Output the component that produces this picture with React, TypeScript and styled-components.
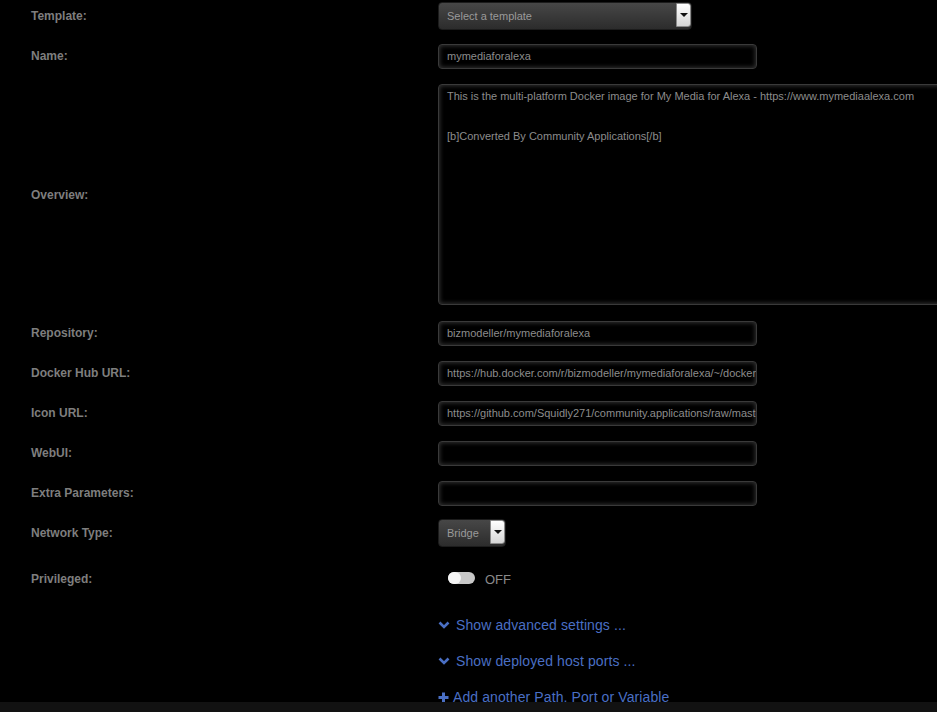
import React from "react";
import styled, { createGlobalStyle } from "styled-components";

const Global = createGlobalStyle`
  html, body { margin: 0; padding: 0; background: #000; overflow: hidden; }
  body { font-family: "Liberation Sans", Arial, sans-serif; }
`;

const Page = styled.div`
  width: 937px;
  height: 712px;
  overflow: hidden;
  background: #000;
`;

const Form = styled.div`
  display: flex;
  flex-direction: column;
`;

const Row = styled.div<{ $h?: number; $mt?: number }>`
  display: grid;
  grid-template-columns: 438px 1fr;
  align-items: center;
  min-height: ${(p) => p.$h ?? 40}px;
  margin-top: ${(p) => p.$mt ?? 0}px;
`;

const Label = styled.div`
  padding-left: 31px;
  font-size: 12px;
  font-weight: bold;
  color: #7e7e7e;
`;

const Input = styled.div`
  box-sizing: border-box;
  width: 319px;
  height: 25px;
  padding: 0 8px;
  display: flex;
  align-items: center;
  background: #000;
  border: 1px solid #3a3a3a;
  border-radius: 4px;
  box-shadow: inset 0 0 4px 1px rgba(90, 90, 90, 0.55);
  color: #8c8c8c;
  font-size: 11px;
  white-space: nowrap;
  overflow: hidden;
`;

const TextArea = styled.div`
  box-sizing: border-box;
  width: 560px;
  height: 221px;
  margin: 8px 0;
  padding: 1px 8px;
  background: #000;
  border: 1px solid #3a3a3a;
  border-radius: 4px;
  box-shadow: inset 0 0 4px 1px rgba(90, 90, 90, 0.55);
  color: #8c8c8c;
  font-size: 11px;
  line-height: 20px;
  white-space: pre-wrap;
`;

const Select = styled.div<{ $w: number }>`
  box-sizing: border-box;
  width: ${(p) => p.$w}px;
  height: 28px;
  display: flex;
  align-items: stretch;
  border-radius: 4px;
  background: linear-gradient(#474747, #2c2c2c);
  border: 1px solid #1c1c1c;
  overflow: hidden;
`;

const SelectText = styled.div`
  flex: 1;
  display: flex;
  align-items: center;
  padding-left: 8px;
  color: #9a9a9a;
  font-size: 11px;
`;

const Arrow = styled.div`
  box-sizing: border-box;
  width: 15px;
  margin-bottom: 2px;
  background: linear-gradient(#ffffff, #d6d6d6);
  border: 1px solid #8a8a8a;
  border-radius: 0 3px 3px 0;
  display: flex;
  align-items: center;
  justify-content: center;
  &::after {
    content: "";
    border-left: 4px solid transparent;
    border-right: 4px solid transparent;
    border-top: 4px solid #111;
  }
`;

const ToggleWrap = styled.div`
  display: flex;
  align-items: center;
  gap: 10px;
  padding-left: 10px;
`;

const Toggle = styled.div`
  width: 27px;
  height: 12px;
  margin-top: -2px;
  border-radius: 6px;
  background: #c8c8c8;
  display: flex;
  align-items: center;
  &::before {
    content: "";
    width: 13px;
    height: 12px;
    border-radius: 6px;
    background: #f4f4f4;
  }
`;

const ToggleText = styled.span`
  font-size: 13px;
  color: #8a8a8a;
`;

const Links = styled.div`
  display: flex;
  flex-direction: column;
  padding-left: 438px;
  margin-top: 8px;
`;

const LinkRow = styled.div`
  height: 36px;
  display: flex;
  align-items: center;
  gap: 6px;
  font-size: 14px;
  letter-spacing: 0.1px;
  color: #4a6fc4;
`;

const Footer = styled.div`
  position: fixed;
  left: 0;
  right: 0;
  bottom: 0;
  height: 10px;
  background: #121212;
  overflow: hidden;
  padding: 9px 0 0 26px;
  box-sizing: border-box;
  font-size: 11px;
  color: #6a6a6a;
`;

const Chevron = () => (
  <svg width="12" height="10" viewBox="0 0 12 10">
    <path d="M1.5 2.5 L6 7 L10.5 2.5" fill="none" stroke="#4a6fc4" strokeWidth="2.6" />
  </svg>
);

const Plus = () => (
  <svg width="11" height="11" viewBox="0 0 11 11">
    <path d="M5.5 0.5 V10.5 M0.5 5.5 H10.5" stroke="#4a6fc4" strokeWidth="3" />
  </svg>
);

const fields: [string, string][] = [
  ["Repository:", "bizmodeller/mymediaforalexa"],
  ["Docker Hub URL:", "https://hub.docker.com/r/bizmodeller/mymediaforalexa/~/dockerfile/"],
  ["Icon URL:", "https://github.com/Squidly271/community.applications/raw/master/source/"],
  ["WebUI:", ""],
  ["Extra Parameters:", ""],
];

export default function App() {
  return (
    <Page>
      <Global />
      <Form>
        <Row $h={32} style={{ marginBottom: 4 }}>
          <Label>Template:</Label>
          <Select $w={254}>
            <SelectText>Select a template</SelectText>
            <Arrow />
          </Select>
        </Row>
        <Row>
          <Label>Name:</Label>
          <Input>mymediaforalexa</Input>
        </Row>
        <Row>
          <Label>Overview:</Label>
          <TextArea>
            {"This is the multi-platform Docker image for My Media for Alexa - https://www.mymediaalexa.com\n\n[b]Converted By Community Applications[/b]"}
          </TextArea>
        </Row>
        {fields.map(([l, v]) => (
          <Row key={l}>
            <Label>{l}</Label>
            <Input>{v}</Input>
          </Row>
        ))}
        <Row>
          <Label>Network Type:</Label>
          <Select $w={68}>
            <SelectText>Bridge</SelectText>
            <Arrow />
          </Select>
        </Row>
        <Row $mt={6}>
          <Label>Privileged:</Label>
          <ToggleWrap>
            <Toggle />
            <ToggleText>OFF</ToggleText>
          </ToggleWrap>
        </Row>
      </Form>
      <Links>
        <LinkRow>
          <Chevron />
          Show advanced settings ...
        </LinkRow>
        <LinkRow>
          <Chevron />
          Show deployed host ports ...
        </LinkRow>
        <LinkRow style={{ gap: 4 }}>
          <Plus />
          Add another Path, Port or Variable
        </LinkRow>
      </Links>
      <Footer>Updated 2025-05-20</Footer>
    </Page>
  );
}
